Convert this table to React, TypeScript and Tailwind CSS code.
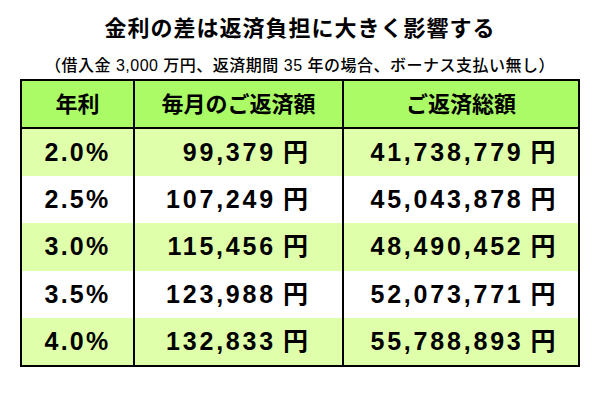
import React from 'react';

const rows = [
  { rate: '2.0%', monthly: '99,379', total: '41,738,779' },
  { rate: '2.5%', monthly: '107,249', total: '45,043,878' },
  { rate: '3.0%', monthly: '115,456', total: '48,490,452' },
  { rate: '3.5%', monthly: '123,988', total: '52,073,771' },
  { rate: '4.0%', monthly: '132,833', total: '55,788,893' },
];

const font = { fontFamily: '"Liberation Sans", "Noto Sans CJK JP", sans-serif' };

const Yen = () => <span className="ml-[7px] tracking-normal">円</span>;

export default function App() {
  return (
    <div className="w-[600px] h-[400px] bg-white flex flex-col items-center text-black" style={font}>
      <h1 className="mt-[14px] h-[30px] text-[22px] leading-[30px] font-bold tracking-[1px]">
        金利の差は返済負担に大きく影響する
      </h1>
      <p className="mt-[12px] h-[20px] text-[16px] leading-[20px] font-medium tracking-[0.5px]">
        （借入金 3,000 万円、返済期間 35 年の場合、ボーナス支払い無し）
      </p>
      <table className="mt-[3px] w-[558px] table-fixed border-collapse border-2 border-black">
        <colgroup>
          <col className="w-[113px]" />
          <col className="w-[209px]" />
          <col className="w-[236px]" />
        </colgroup>
        <thead>
          <tr className="h-[48px] bg-[#aafb66] border-b-2 border-black text-[22px] font-bold">
            <th className="border-r-2 border-black text-center">年利</th>
            <th className="border-r-2 border-black text-center">毎月のご返済額</th>
            <th className="text-center">ご返済総額</th>
          </tr>
        </thead>
        <tbody>
          {rows.map((r, i) => (
            <tr
              key={r.rate}
              className={i % 2 === 0 ? 'h-[47.5px] bg-[#dfffaa]' : 'h-[47.5px] bg-white'}
            >
              <td className="border-r-2 border-black text-center text-[25px] font-bold tracking-[2.2px]">
                {r.rate}
              </td>
              <td className="border-r-2 border-black text-right pr-[34px] text-[25px] font-bold tracking-[2.8px]">
                {r.monthly}
                <Yen />
              </td>
              <td className="text-center pl-[4px] text-[25px] font-bold tracking-[2.8px]">
                {r.total}
                <Yen />
              </td>
            </tr>
          ))}
        </tbody>
      </table>
    </div>
  );
}
